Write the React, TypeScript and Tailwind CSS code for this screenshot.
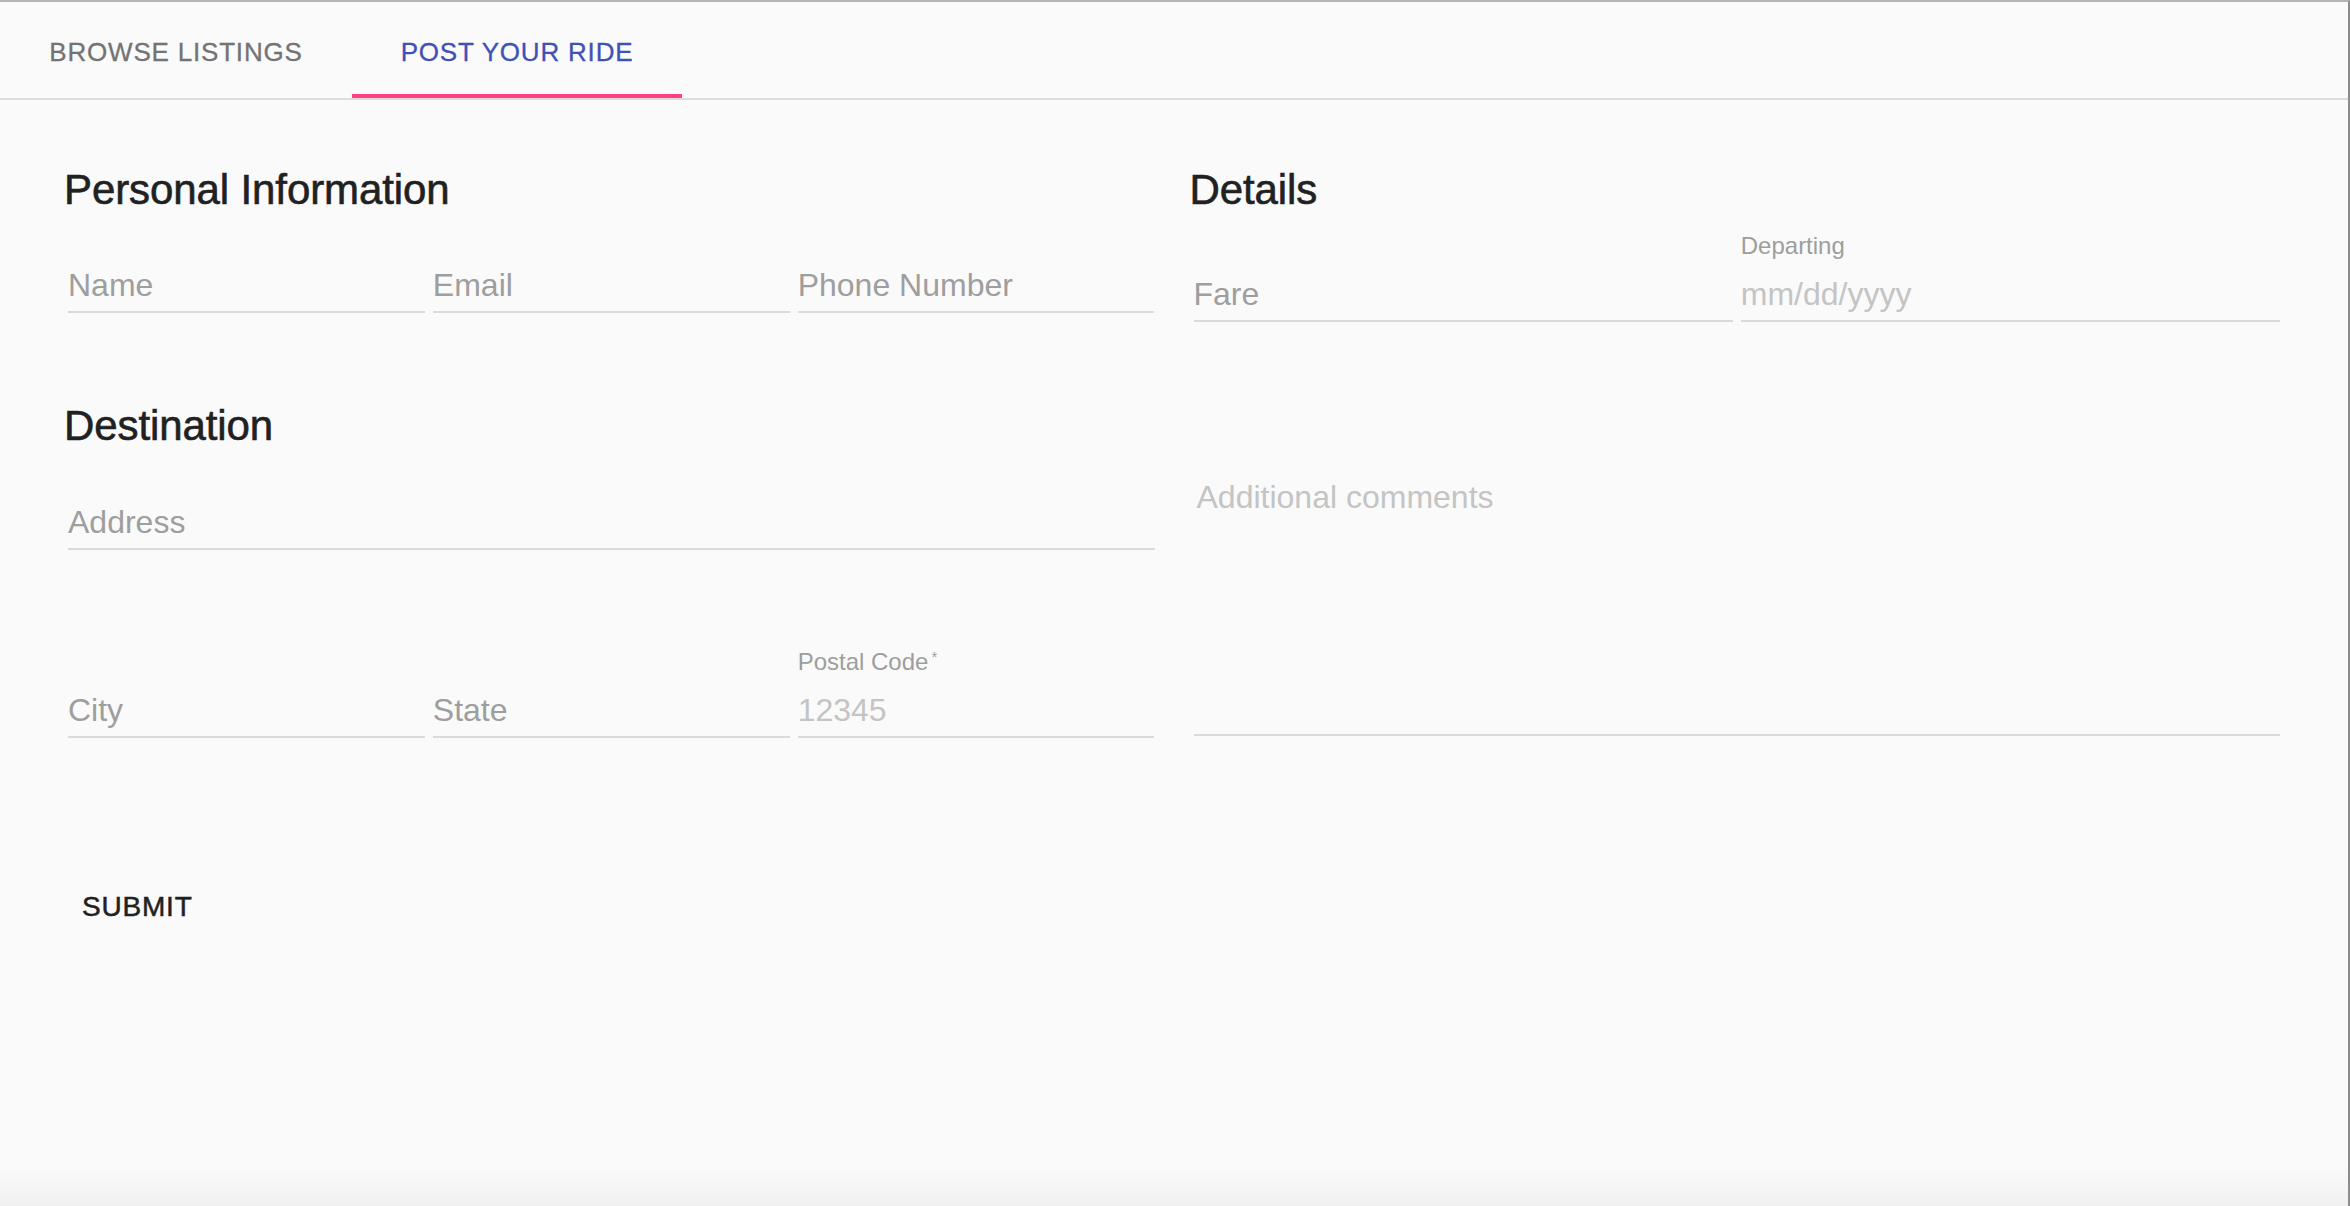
import React from "react";

const font = { fontFamily: '"Liberation Sans", Arial, sans-serif' };

type FieldProps = {
  label?: React.ReactNode;
  value: string;
  placeholder?: boolean;
  className?: string;
};

// one underlined text field, label zone on top
function Field({ label, value, placeholder, className = "" }: FieldProps) {
  return (
    <div className={`mx-1 flex-1 min-w-0 ${className}`}>
      <div className="h-[24px] text-[24px] leading-[24px] text-[#9e9e9e] whitespace-nowrap">
        {label}
      </div>
      <div
        className={`mt-3 h-[48px] leading-[48px] text-[32px] box-content pb-[2px] border-b-2 border-[#dadada] whitespace-nowrap ${
          placeholder ? "text-[#c4c4c4]" : "text-[#9e9e9e]"
        }`}
      >
        {value}
      </div>
    </div>
  );
}

function Heading({ children }: { children: React.ReactNode }) {
  return (
    <h2 className="text-[42px] leading-[48px] font-medium text-[#212121] tracking-[-0.1px] [-webkit-text-stroke:0.6px_#212121]">
      {children}
    </h2>
  );
}

export default function App() {
  return (
    <div
      style={font}
      className="w-full h-[1206px] bg-[#fafafa] border-t-2 border-t-[#b4b4b4] border-r-2 border-r-[#8c8c8c] flex flex-col overflow-hidden"
    >
      {/* Tabs */}
      <div className="flex h-[98px] border-b-2 border-[#dcdcdc] shrink-0">
        <button className="w-[352px] h-full pt-[5px] flex items-center justify-center text-[26px] uppercase tracking-[0.8px] text-[#737373] [-webkit-text-stroke:0.3px_#737373]">
          Browse Listings
        </button>
        <button className="relative w-[330px] h-full pt-[5px] flex items-center justify-center text-[26px] uppercase tracking-[0.8px] text-[#3f51b5] [-webkit-text-stroke:0.3px_#3f51b5]">
          Post Your Ride
          <span className="absolute left-0 right-0 bottom-0 h-[4px] bg-[#ff4081]" />
        </button>
      </div>

      {/* Form */}
      <form className="px-16 pt-[66px] grid grid-cols-2 gap-x-[31px]">
        <div className="flex flex-col">
          <Heading>Personal Information</Heading>
          <div className="mt-[11px] flex">
            <Field value="Name" />
            <Field value="Email" />
            <Field value="Phone Number" />
          </div>

          <div className="mt-[89px]">
            <Heading>Destination</Heading>
          </div>
          <div className="mt-3 flex">
            <Field value="Address" />
          </div>
          <div className="mt-[100px] flex">
            <Field value="City" />
            <Field value="State" />
            <Field
              label={
                <span>
                  Postal Code
                  <span className="relative -top-[8px] ml-[3px] text-[15px]">*</span>
                </span>
              }
              value="12345"
              placeholder
            />
          </div>
        </div>

        <div className="flex flex-col">
          <Heading>Details</Heading>
          <div className="mt-[20px] flex">
            <Field value="Fare" />
            <Field label="Departing" value="mm/dd/yyyy" placeholder />
          </div>
          <div className="mx-1 mt-[151px] h-[263px] border-b-2 border-[#dadada] pl-[3px] text-[32px] leading-[48px] text-[#c4c4c4]">
            Additional comments
          </div>
        </div>
      </form>

      <div className="pl-[50px] mt-[133px]">
        <button className="px-8 py-4 text-[28px] leading-[40px] font-medium uppercase tracking-[0.8px] text-[#212121] [-webkit-text-stroke:0.5px_#212121]">
          Submit
        </button>
      </div>

      <div className="mt-auto h-[40px] bg-gradient-to-b from-[#fafafa] to-[#f1f1f1]" />
    </div>
  );
}
